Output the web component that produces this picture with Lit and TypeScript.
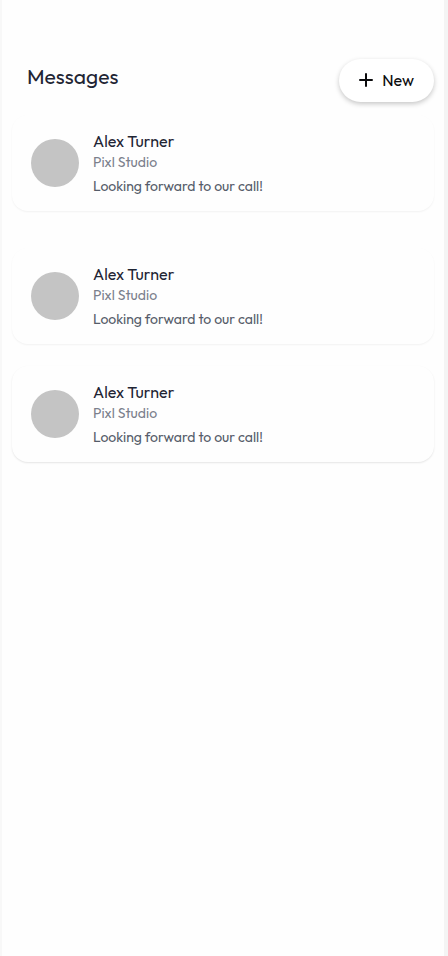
import { LitElement, html, css } from "lit";
import { customElement, property } from "lit/decorators.js";

@customElement("message-card")
class MessageCard extends LitElement {
  @property() name = "";
  @property() company = "";
  @property() preview = "";

  static styles = css`
    :host {
      display: block;
    }
    .card {
      display: flex;
      align-items: center;
      gap: 14px;
      padding: 15px 19px;
      border-radius: 16px;
      background: #fefefe;
      box-shadow: 0 1px 2px rgba(0, 0, 0, 0.05);
    }
    :host([raised]) .card {
      box-shadow: 0 1px 2px rgba(0, 0, 0, 0.1);
    }
    .avatar {
      flex: none;
      width: 48px;
      height: 48px;
      border-radius: 50%;
      background: #c4c4c4;
    }
    .body {
      min-width: 0;
    }
    .name,
    .company,
    .preview {
      margin: 0;
      font-weight: 400;
      line-height: 20px;
    }
    .name {
      font-size: 16px;
      line-height: 22px;
      color: #1f2534;
    }
    .company {
      font-size: 14px;
      color: #7b808c;
    }
    .preview {
      margin-top: 4px;
      font-size: 14px;
      color: #555c69;
    }
  `;

  render() {
    return html`
      <article class="card">
        <div class="avatar"></div>
        <div class="body">
          <h2 class="name">${this.name}</h2>
          <p class="company">${this.company}</p>
          <p class="preview">${this.preview}</p>
        </div>
      </article>
    `;
  }
}

@customElement("app-root")
class AppRoot extends LitElement {
  static styles = css`
    :host {
      display: block;
      box-sizing: border-box;
      min-height: 100vh;
      padding: 59px 10px 24px;
      border-left: 2px solid #f8f8f8;
      border-right: 4px solid #f4f4f4;
      background: #fefefe;
      font-family: Outfit, Lato, sans-serif;
    }
    .header {
      display: flex;
      justify-content: space-between;
      align-items: flex-start;
      padding-left: 15px;
      margin-bottom: 13px;
    }
    .title {
      margin: 0;
      padding-top: 3px;
      font-size: 21px;
      line-height: 28px;
      font-weight: 400;
      color: #1f2534;
    }
    .new {
      display: flex;
      align-items: center;
      justify-content: center;
      gap: 9px;
      height: 43px;
      padding: 0 20px 1px;
      border: 0;
      border-radius: 22px;
      background: #ffffff;
      box-shadow: 0 2px 5px rgba(0, 0, 0, 0.22);
      font: inherit;
      font-size: 16px;
      line-height: 20px;
      color: #0b0b0d;
      cursor: pointer;
    }
    .list {
      display: grid;
      gap: 22px;
      margin: 0;
      padding: 0;
      list-style: none;
    }
    .pinned {
      margin-bottom: 15px;
    }
  `;

  render() {
    const messages = [
      { pinned: true, raised: false },
      { pinned: false, raised: false },
      { pinned: false, raised: true },
    ];
    return html`
      <header class="header">
        <h1 class="title">Messages</h1>
        <button class="new" type="button">
          <svg width="14" height="14" viewBox="0 0 14 14" fill="none" stroke="currentColor" stroke-width="2" stroke-linecap="round" aria-hidden="true">
            <path d="M7 1v12M1 7h12" />
          </svg>
          New
        </button>
      </header>
      <ul class="list">
        ${messages.map(
          (m) => html`<li class=${m.pinned ? "pinned" : ""}>
            <message-card
              name="Alex Turner"
              company="Pixl Studio"
              preview="Looking forward to our call!"
              ?raised=${m.raised}
            ></message-card>
          </li>`
        )}
      </ul>
    `;
  }
}
